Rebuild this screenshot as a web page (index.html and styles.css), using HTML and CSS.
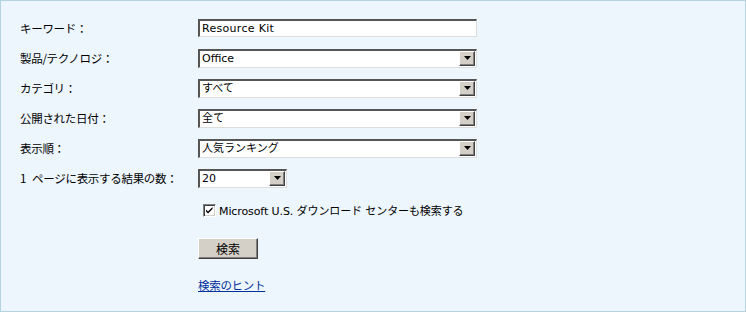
FILE: index.html
```html
<!DOCTYPE html>
<html lang="ja">
<head>
<meta charset="utf-8">
<link rel="stylesheet" href="styles.css">
</head>
<body>
<div class="panel">
  <div class="form">
    <div class="label">キーワード：</div>
    <div class="field"><div class="textbox">Resource Kit</div></div>

    <div class="label">製品/テクノロジ：</div>
    <div class="field"><div class="select wide"><span class="val">Office</span><span class="arrow"><svg width="7" height="4" viewBox="0 0 7 4"><path d="M0 0h7L3.5 4z" fill="#000"/></svg></span></div></div>

    <div class="label">カテゴリ：</div>
    <div class="field"><div class="select wide"><span class="val">すべて</span><span class="arrow"><svg width="7" height="4" viewBox="0 0 7 4"><path d="M0 0h7L3.5 4z" fill="#000"/></svg></span></div></div>

    <div class="label">公開された日付：</div>
    <div class="field"><div class="select wide"><span class="val">全て</span><span class="arrow"><svg width="7" height="4" viewBox="0 0 7 4"><path d="M0 0h7L3.5 4z" fill="#000"/></svg></span></div></div>

    <div class="label">表示順：</div>
    <div class="field"><div class="select wide"><span class="val">人気ランキング</span><span class="arrow"><svg width="7" height="4" viewBox="0 0 7 4"><path d="M0 0h7L3.5 4z" fill="#000"/></svg></span></div></div>

    <div class="label"><span class="one">1</span>ページに表示する結果の数：</div>
    <div class="field"><div class="select narrow"><span class="val">20</span><span class="arrow"><svg width="7" height="4" viewBox="0 0 7 4"><path d="M0 0h7L3.5 4z" fill="#000"/></svg></span></div></div>

    <div class="label"></div>
    <div class="field check-row">
      <span class="checkbox"><svg width="9" height="9" viewBox="0 0 9 9"><path d="M1 3.5l2 2 4.5-4.5v2L3 7.5 1 5.5z" fill="#000"/></svg></span>
      <span class="check-text">Microsoft U.S. ダウンロード センターも検索する</span>
    </div>

    <div class="label"></div>
    <div class="field"><span class="button">検索</span></div>

    <div class="label"></div>
    <div class="field"><a class="hint" href="#">検索のヒント</a></div>
  </div>
</div>
</body>
</html>
```

FILE: styles.css
```css
html, body {
  margin: 0;
  padding: 0;
}
body {
  font-family: "Noto Sans CJK JP", "DejaVu Sans", sans-serif;
  font-size: 12px;
  color: #000;
}
.panel {
  box-sizing: border-box;
  width: 746px;
  height: 312px;
  background: #edf5fd;
  border: 1px solid #b5d3e0;
  padding: 12px 0 0 19px;
}
.form {
  display: grid;
  grid-template-columns: 178px 300px;
  grid-template-rows: repeat(6, 30px) 34px 42px 32px;
}
.label {
  display: flex;
  align-items: center;
  font-size: 11.5px;
  letter-spacing: -0.3px;
  white-space: nowrap;
}
.one {
  margin-right: 6px;
}
.field {
  display: flex;
  align-items: center;
}
.textbox {
  box-sizing: border-box;
  width: 279px;
  height: 18px;
  background: #fff;
  border-top: 2px solid #555;
  border-left: 2px solid #555;
  border-right: 1px solid #ddd;
  border-bottom: 1px solid #ddd;
  font-family: "DejaVu Sans", sans-serif;
  font-size: 11px;
  line-height: 15px;
  padding-left: 2px;
  letter-spacing: 0.3px;
}
.select {
  box-sizing: border-box;
  height: 19px;
  background: #fff;
  border-top: 2px solid #555;
  border-left: 2px solid #555;
  border-right: 1px solid #ddd;
  border-bottom: 1px solid #ddd;
  display: flex;
  align-items: stretch;
}
.select.wide { width: 279px; }
.select.narrow { width: 89px; }
.val {
  flex: 1;
  font-family: "DejaVu Sans", "Noto Sans CJK JP", sans-serif;
  font-size: 11px;
  line-height: 16px;
  padding-left: 2px;
}
.arrow {
  box-sizing: border-box;
  width: 16px;
  height: 15px;
  margin: 0 1px 0 0;
  background: #d4d0c8;
  border-top: 1px solid #fff;
  border-left: 1px solid #fff;
  border-right: 1px solid #404040;
  border-bottom: 1px solid #404040;
  box-shadow: inset -1px -1px 0 #808080;
  display: flex;
  align-items: center;
  justify-content: center;
}
.check-row {
  padding-left: 5px;
}
.checkbox {
  box-sizing: border-box;
  width: 13px;
  height: 13px;
  background: #fff;
  border-top: 1px solid #808080;
  border-left: 1px solid #808080;
  border-right: 1px solid #fff;
  border-bottom: 1px solid #fff;
  box-shadow: inset 1px 1px 0 #404040, inset -1px -1px 0 #d4d0c8;
  display: flex;
  align-items: center;
  justify-content: center;
  margin-right: 3px;
}
.check-text {
  font-family: "DejaVu Sans", "Noto Sans CJK JP", sans-serif;
  font-size: 11px;
  letter-spacing: -0.1px;
}
.button {
  box-sizing: border-box;
  width: 60px;
  height: 21px;
  background: #d4d0c8;
  border-top: 1px solid #fff;
  border-left: 1px solid #fff;
  border-right: 1px solid #404040;
  border-bottom: 1px solid #404040;
  box-shadow: inset -1px -1px 0 #808080;
  display: flex;
  align-items: center;
  justify-content: center;
  font-size: 12px;
}
.hint {
  color: #00309c;
  font-size: 11.5px;
  letter-spacing: -0.3px;
}
```
